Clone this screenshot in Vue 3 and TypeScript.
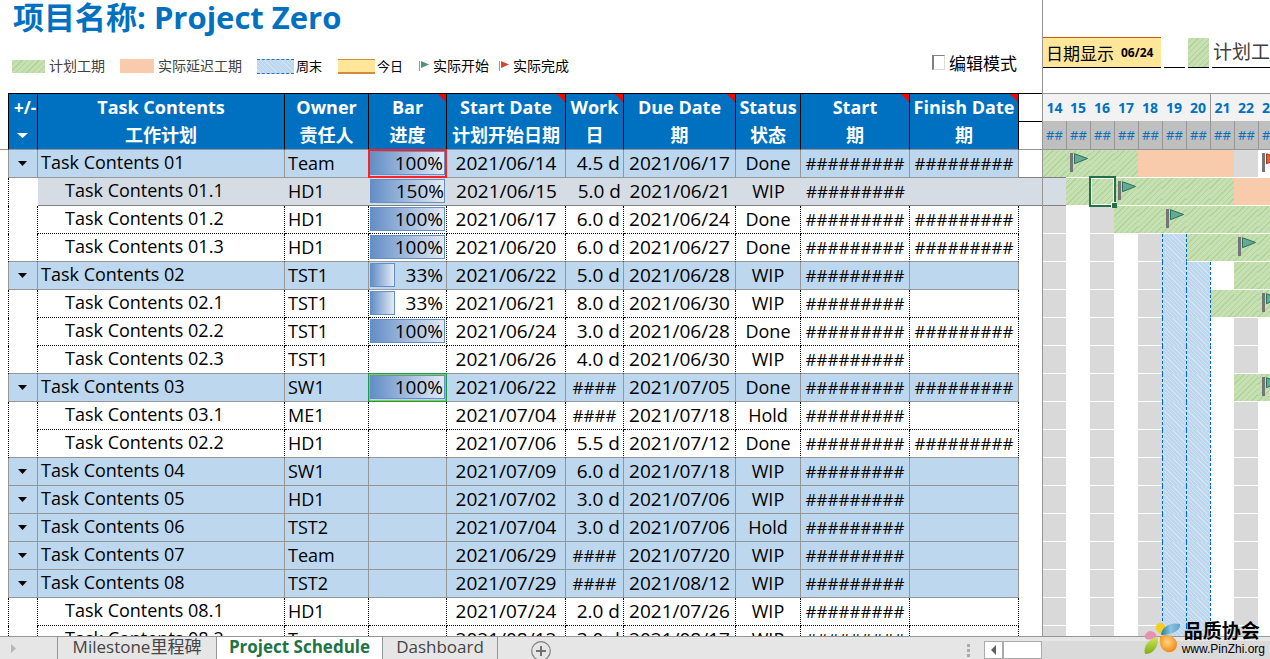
<script setup lang="ts">
type Kind = 'group' | 'child'
interface Task {
  name: string
  owner: string
  bar: number | null
  start: string
  work: string
  due: string
  status: string
  finished: boolean
  kind: Kind
  frame?: 'red' | 'green'
  selected?: boolean
  plan?: [number, number]
  delay?: [number, number]
  flag?: number
  endFlag?: number
}

const HASHES = '#########'

function row(kind: Kind, name: string, owner: string, bar: number | null, start: string, work: string,
  due: string, status: string, finished = false, extra: Partial<Task> = {}): Task {
  return { kind, name: 'Task Contents ' + name, owner, bar, start: '2021/' + start, work, due: '2021/' + due, status, finished, ...extra }
}

const tasks: Task[] = [
  row('group', '01', 'Team', 100, '06/14', '4.5 d', '06/17', 'Done', true, { frame: 'red', plan: [14, 17], delay: [18, 21], flag: 15, endFlag: 23 }),
  row('child', '01.1', 'HD1', 150, '06/15', '5.0 d', '06/21', 'WIP', false, { selected: true, plan: [15, 21], delay: [22, 23], flag: 17 }),
  row('child', '01.2', 'HD1', 100, '06/17', '6.0 d', '06/24', 'Done', true, { plan: [17, 24], flag: 19 }),
  row('child', '01.3', 'HD1', 100, '06/20', '6.0 d', '06/27', 'Done', true, { plan: [20, 27], flag: 22 }),
  row('group', '02', 'TST1', 33, '06/22', '5.0 d', '06/28', 'WIP', false, { plan: [22, 28] }),
  row('child', '02.1', 'TST1', 33, '06/21', '8.0 d', '06/30', 'WIP', false, { plan: [21, 30], flag: 23 }),
  row('child', '02.2', 'TST1', 100, '06/24', '3.0 d', '06/28', 'Done', true),
  row('child', '02.3', 'TST1', null, '06/26', '4.0 d', '06/30', 'WIP'),
  row('group', '03', 'SW1', 100, '06/22', '####', '07/05', 'Done', true, { frame: 'green', plan: [22, 30], flag: 23 }),
  row('child', '03.1', 'ME1', null, '07/04', '####', '07/18', 'Hold'),
  row('child', '02.2', 'HD1', null, '07/06', '5.5 d', '07/12', 'Done', true),
  row('group', '04', 'SW1', null, '07/09', '6.0 d', '07/18', 'WIP'),
  row('group', '05', 'HD1', null, '07/02', '3.0 d', '07/06', 'WIP'),
  row('group', '06', 'TST2', null, '07/04', '3.0 d', '07/06', 'Hold'),
  row('group', '07', 'Team', null, '06/29', '####', '07/20', 'WIP'),
  row('group', '08', 'TST2', null, '07/29', '####', '08/12', 'WIP'),
  row('child', '08.1', 'HD1', null, '07/24', '2.0 d', '07/26', 'WIP'),
  row('child', '08.2', 'Team', null, '08/12', '3.0 d', '08/17', 'WIP'),
]

const headers = [
  { en: 'Task Contents', zh: '工作计划', note: false },
  { en: 'Owner', zh: '责任人', note: false },
  { en: 'Bar', zh: '进度', note: true },
  { en: 'Start Date', zh: '计划开始日期', note: true },
  { en: 'Work', zh: '日', note: true },
  { en: 'Due Date', zh: '期', note: true },
  { en: 'Status', zh: '状态', note: false },
  { en: 'Start', zh: '期', note: true },
  { en: 'Finish Date', zh: '期', note: true },
]

const days = [14, 15, 16, 17, 18, 19, 20, 21, 22, 23]

function within(day: number, range?: [number, number]): boolean {
  return !!range && day >= range[0] && day <= range[1]
}

function dayClass(task: Task, day: number): string {
  if (within(day, task.plan)) return 'plan'
  if (within(day, task.delay)) return 'delay'
  if (task.selected && day === 14) return 'picked'
  if (day === 19 || day === 20) return 'weekend'
  return day % 2 === 0 ? 'shade' : ''
}

function rowClass(task: Task, index: number) {
  const next = tasks[index + 1]
  return [task.kind, { selected: task.selected, solid: !!next && next.kind === 'group' }]
}

const isHash = (text: string): boolean => text.startsWith('#')
</script>

<template>
  <div class="workbook">
    <main class="sheet">
      <section class="pane">
        <header class="top">
          <h1>项目名称: Project Zero</h1>
          <div class="tools">
            <ul class="legend">
              <li class="soft"><i class="swatch plan"></i>计划工期</li>
              <li class="soft"><i class="swatch late"></i>实际延迟工期</li>
              <li class="small"><i class="swatch week"></i>周末</li>
              <li class="small"><i class="swatch today"></i>今日</li>
              <li class="mark">
                <svg width="10" height="12" viewBox="0 0 10 12"><path d="M0.5 1V11" stroke="#999" /><path d="M2 1L10 4.5L2 8Z" fill="#4c9480" /></svg>实际开始
              </li>
              <li class="mark">
                <svg width="10" height="12" viewBox="0 0 10 12"><path d="M0.5 1V11" stroke="#999" /><path d="M2 1L10 4.5L2 8Z" fill="#d2482a" /></svg>实际完成
              </li>
            </ul>
            <label class="edit"><input type="checkbox" />编辑模式</label>
          </div>
        </header>

        <table class="grid">
          <colgroup>
            <col class="c-edge" /><col class="c-toggle" /><col class="c-task" /><col class="c-owner" /><col class="c-bar" />
            <col class="c-start" /><col class="c-work" /><col class="c-due" /><col class="c-status" />
            <col class="c-real" /><col class="c-real" /><col class="c-gap" />
          </colgroup>
          <thead>
            <tr>
              <td class="edge"></td>
              <th class="toggle">
                <span class="line">+/-</span>
                <button class="line" aria-label="Filter"><svg width="11" height="5" viewBox="0 0 11 5"><path d="M0 0H11L5.5 5Z" fill="#fff" /></svg></button>
              </th>
              <th v-for="(h, i) in headers" :key="i" :class="{ note: h.note }">
                <span class="line">{{ h.en }}</span><span class="line">{{ h.zh }}</span>
              </th>
              <td class="gap"><span class="rule"></span></td>
            </tr>
          </thead>
          <tbody>
            <tr v-for="(t, i) in tasks" :key="i" :class="rowClass(t, i)">
              <td class="edge"></td>
              <td class="toggle">
                <button v-if="t.kind === 'group'" :aria-label="'Toggle ' + t.name"><svg width="9" height="5" viewBox="0 0 9 5"><path d="M0 0H9L4.5 5Z" fill="#000" /></svg></button>
              </td>
              <td class="task">{{ t.name }}</td>
              <td class="owner">{{ t.owner }}</td>
              <td class="bar" :class="t.frame">
                <template v-if="t.bar !== null">
                  <i class="fill" :style="{ width: Math.min(t.bar, 100) + '%' }"></i><span>{{ t.bar }}%</span>
                </template>
              </td>
              <td class="date">{{ t.start }}</td>
              <td class="work" :class="{ hash: isHash(t.work) }">{{ t.work }}</td>
              <td class="date">{{ t.due }}</td>
              <td class="status">{{ t.status }}</td>
              <td class="hash">{{ HASHES }}</td>
              <td class="hash">{{ t.finished ? HASHES : '' }}</td>
              <td class="gap"></td>
            </tr>
          </tbody>
        </table>
      </section>

      <section class="pane chart">
        <header class="top keys">
          <div class="shown"><span>日期显示</span><b>06/24</b></div>
          <div class="blank"></div>
          <div class="sample plan"></div>
          <div class="caption">计划工期</div>
        </header>
        <table class="gantt">
          <colgroup><col v-for="d in days" :key="d" :class="d === 14 ? 'c-first' : 'c-day'" /></colgroup>
          <thead>
            <tr class="nums"><th v-for="d in days" :key="d" :class="{ monday: d === 21 }">{{ d }}</th></tr>
            <tr class="names"><th v-for="d in days" :key="d">##</th></tr>
          </thead>
          <tbody>
            <tr v-for="(t, i) in tasks" :key="i">
              <td v-for="d in days" :key="d" :class="[dayClass(t, d), { above: i === 0 && d === 14 }]">
                <svg v-if="t.flag === d" class="flag" width="19" height="20" viewBox="0 0 19 20"><path d="M0 0H3V19H0Z" fill="#757575" /><path d="M4.5 0.7L17.5 5.5L4.5 10.7Z" fill="#69a893" stroke="#28705c" /></svg>
                <svg v-if="t.endFlag === d" class="flag" width="19" height="20" viewBox="0 0 19 20"><path d="M0 0H3V19H0Z" fill="#757575" /><path d="M4.5 0.7L17.5 5.5L4.5 10.7Z" fill="#e0603f" stroke="#a83418" /></svg>
                <span v-if="t.selected && d === 16" class="cursor"></span>
              </td>
            </tr>
          </tbody>
        </table>
      </section>
    </main>

    <footer class="tabs">
      <button class="prev" aria-label="Scroll tabs"><svg width="5" height="9" viewBox="0 0 5 9"><path d="M0 0L5 4.5L0 9Z" fill="#b8b8b8" /></svg></button>
      <button class="tab first">Milestone里程碑</button>
      <button class="tab active">Project Schedule</button>
      <button class="tab last">Dashboard</button>
      <button class="add" aria-label="New sheet"><svg width="20" height="20" viewBox="0 0 20 20"><circle cx="10" cy="10" r="9.3" fill="none" stroke="#808080" stroke-width="1.2" /><path d="M5 10H15M10 5V15" stroke="#707070" stroke-width="2" /></svg></button>
      <span class="grip"><i></i><i></i><i></i></span>
      <div class="scroll">
        <button class="back" aria-label="Scroll left"><svg width="5" height="10" viewBox="0 0 5 10"><path d="M5 0V10L0 5Z" fill="#606060" /></svg></button>
        <span class="thumb"></span>
      </div>
    </footer>

    <aside class="brand">
      <svg width="38" height="34" viewBox="0 0 38 34">
        <defs>
          <radialGradient id="orange" cx="0.45" cy="0.4" r="0.6"><stop offset="0" stop-color="#ffd680" /><stop offset="1" stop-color="#f08a1c" /></radialGradient>
          <linearGradient id="blue"><stop offset="0" stop-color="#1f78ad" /><stop offset="0.5" stop-color="#8cc3df" /><stop offset="1" stop-color="#5fa3c8" /></linearGradient>
          <linearGradient id="lime" x2="0" y2="1"><stop offset="0" stop-color="#d2e65a" /><stop offset="1" stop-color="#7fae16" /></linearGradient>
        </defs>
        <path d="M17 12C9 8 11 1 17 1C23 1 22 8 17 12Z" fill="#f6cf1d" />
        <path d="M13 15C5 20 -1 17 1 13C4 7 11 8 13 15Z" fill="#e691b4" />
        <path d="M17 13C18 4 27 0 36 2C37 8 29 13 17 13Z" fill="url(#blue)" />
        <path d="M14 15C15 25 9 32 1 32C-1 26 3 17 14 15Z" fill="url(#lime)" />
        <path d="M16 15C23 10 33 15 33 22C33 28 28 31 23 30C17 28 15 22 16 15Z" fill="url(#orange)" />
      </svg>
      <div class="words"><strong>品质协会</strong><span>www.PinZhi.org</span></div>
    </aside>
  </div>
</template>

<style>
body {
  margin: 0;
  overflow: hidden;
}
</style>

<style scoped>
.workbook {
  position: relative;
  display: flex;
  flex-direction: column;
  height: 100vh;
  overflow: hidden;
  background: #fff;
  color: #000;
  font-family: "Open Sans", "Noto Sans CJK SC", sans-serif;
}
button {
  padding: 0;
  border: 0;
  background: none;
  font: inherit;
  color: inherit;
}
svg {
  display: block;
}
.sheet {
  display: flex;
  flex: 1;
  min-height: 0;
  overflow: hidden;
}
.pane {
  flex: none;
}
.chart {
  flex: 1;
  min-width: 0;
  overflow: hidden;
  border-left: 1px solid #969696;
}
.top {
  box-sizing: border-box;
  height: 93px;
}
h1 {
  margin: 0;
  padding-left: 13px;
  height: 36px;
  line-height: 34px;
  font-size: 31px;
  color: #0070c0;
}
.tools {
  display: flex;
  justify-content: space-between;
  align-items: center;
  height: 60px;
  padding: 0 25px 0 12px;
}
.legend {
  display: flex;
  align-items: center;
  margin: 0;
  padding: 0;
  list-style: none;
  font-size: 14px;
  line-height: 20px;
}
.legend li {
  display: flex;
  align-items: center;
  gap: 4px;
  margin-right: 15px;
}
.legend .small {
  font-size: 13px;
  gap: 2px;
  margin-right: 16px;
}
.soft {
  color: #404040;
}
.legend .mark {
  margin-right: 10px;
}
.swatch {
  box-sizing: border-box;
  width: 33px;
  height: 13px;
}
.swatch.late {
  width: 34px;
  height: 14px;
  background: #f8cbad;
}
.swatch.week {
  width: 37px;
  height: 15px;
  border: 1px dashed #2f75b5;
  border-width: 1px 0;
  background: repeating-linear-gradient(45deg, #bdd7ee 0 2px, #d0e2f3 2px 3px);
}
.swatch.today {
  width: 37px;
  height: 15px;
  border: solid #d68a3c;
  border-width: 1px 0 2px;
  background: #ffe699;
}
.plan {
  background: repeating-linear-gradient(135deg, #c6e0b4 0 3px, #b0d498 3px 4px);
}
.edit {
  display: flex;
  align-items: center;
  gap: 4px;
  padding-bottom: 8px;
  font-size: 17px;
}
.edit input {
  appearance: none;
  margin: 0;
  width: 13px;
  height: 15px;
  border: 1px solid #dcdcdc;
  border-top-color: #808080;
  border-left: 2px solid #808080;
  background: #fff;
}

table {
  table-layout: fixed;
  border-collapse: separate;
  border-spacing: 0;
}
.grid {
  width: 1042px;
}
.c-edge { width: 9px; }
.c-toggle { width: 29px; }
.c-task { width: 247px; }
.c-owner { width: 84px; }
.c-bar { width: 78px; }
.c-start { width: 119px; }
.c-work { width: 58px; }
.c-due { width: 112px; }
.c-status { width: 65px; }
.c-real { width: 109px; }
.c-gap { width: 23px; }
.c-first { width: 23px; }
.c-day { width: 24px; }

th,
td {
  box-sizing: border-box;
  padding: 0;
  white-space: nowrap;
}
.grid th {
  position: relative;
  height: 57px;
  border: solid #000;
  border-width: 1px 1px 1px 0;
  border-bottom-color: #969696;
  background: #0070c0;
  color: #fff;
  font-size: 18px;
  font-weight: 700;
  vertical-align: top;
  overflow: hidden;
}
.line {
  display: block;
  width: 100%;
  height: 28px;
  line-height: 27px;
  text-align: center;
}
.line svg {
  margin: 0 auto;
}
.line + .line {
  height: 27px;
}
.grid th.toggle span.line {
  box-sizing: border-box;
  padding-left: 5px;
  font-size: 17px;
  text-align: left;
}
.note::after {
  content: "";
  position: absolute;
  top: 0;
  right: 0;
  width: 8px;
  height: 8px;
  background: #f00;
  clip-path: polygon(0 0, 100% 0, 100% 100%);
}
thead .edge {
  border-right: 1px solid #000;
  border-bottom: 1px solid #969696;
}
thead .gap {
  border-top: 1px solid #000;
  border-bottom: 1px solid #969696;
  vertical-align: top;
}
.rule {
  display: block;
  box-sizing: border-box;
  height: 28px;
  border-bottom: 1px solid #000;
}
.grid tbody td {
  height: 28px;
  border-right: 1px dotted #000;
  border-bottom: 1px dotted #000;
  font-size: 19px;
  line-height: 27px;
}
.grid tbody .child:not(.solid) td.toggle {
  border-bottom: 0;
}
.grid tbody .solid td {
  border-bottom: 1px solid #969696;
}
.grid tbody .group td {
  border-right: 1px solid #969696;
  border-bottom: 1px solid #969696;
  background: #bdd7ee;
}
.grid tbody .selected td {
  border-right: 0;
  border-bottom: 1px solid #808080;
  background: #d6dce4;
}
.grid tbody .selected td.toggle {
  border-bottom: 0;
  background: none;
}
.grid tbody tr td.edge {
  background: none;
  border-bottom: 0;
}
.grid tbody .selected td.edge {
  border-right: 1px dotted #000;
}
.grid tbody tr:not(.selected) td.gap {
  background: none;
  border: 0;
}
.grid tbody tr.group:first-child td.gap {
  border-bottom: 1px solid #808080;
}
.toggle button {
  display: flex;
  align-items: center;
  justify-content: center;
  box-sizing: border-box;
  width: 100%;
  padding-right: 2px;
}
.grid tbody td.task {
  padding: 0 0 2px 3px;
  font-size: 18px;
  line-height: 25px;
}
.grid tbody .child td.task {
  padding-left: 27px;
}
.owner {
  padding-left: 3px;
}
.grid tbody td.owner,
.grid tbody td.status {
  font-size: 18px;
}
.bar {
  position: relative;
  padding: 0 3px 0 1px;
  text-align: right;
}
.bar span {
  position: relative;
}
.fill {
  position: absolute;
  top: 1px;
  left: 1px;
  box-sizing: border-box;
  height: 24px;
  max-width: 75px;
  border: 1px solid #638ec6;
  background: linear-gradient(to right, #638ec6, #e3eaf5);
}
.bar.red::after,
.bar.green::after {
  content: "";
  position: absolute;
  inset: -1px;
  border: 2px solid #f22;
}
.bar.green::after {
  border: 1px solid #1e9a50;
  box-shadow: inset 0 0 0 1px #8fca4a;
}
.date,
.status {
  text-align: center;
}
.work {
  padding-right: 3px;
  text-align: right;
}
.grid tbody td.hash {
  font-size: 17px;
  text-align: center;
}
.grid tbody td.work.hash {
  padding: 0;
}

.keys {
  display: flex;
  align-items: flex-start;
  gap: 3px;
  padding-top: 37px;
}
.keys div {
  box-sizing: border-box;
  flex: none;
  height: 31px;
  border-bottom: 1px solid #000;
}
.keys .shown {
  display: flex;
  align-items: center;
  gap: 7px;
  width: 118px;
  padding-left: 3px;
  border-top: 1px solid #c55a11;
  background: #ffe699;
  font-size: 17px;
}
.shown b {
  font-size: 12px;
}
.keys .blank,
.keys .sample {
  width: 21px;
}
.keys .sample {
  border-top: 1px solid #fff;
}
.keys .caption {
  min-width: 120px;
  padding-left: 1px;
  font-size: 19px;
  line-height: 30px;
  color: #404040;
}
.gantt {
  width: 239px;
}
.nums th {
  height: 28px;
  border-top: 1px solid #969696;
  background: #f2f2f2;
  color: #0070c0;
  font-size: 14px;
  line-height: 27px;
}
.nums .monday {
  border-left: 1px solid #969696;
}
.names th {
  height: 29px;
  border-left: 1px solid #969696;
  border-bottom: 1px solid #969696;
  background: #bfbfbf;
  color: #0070c0;
  font-size: 13px;
  font-weight: 400;
}
.names th:first-child {
  border-left: 0;
}
.gantt tbody td {
  position: relative;
  height: 28px;
  border-bottom: 1px solid #fff;
}
.shade {
  background: #d9d9d9;
}
.delay {
  background: #f8cbad;
}
.gantt tbody td.picked {
  background: #d6dce4;
  border-bottom-color: #808080;
}
.gantt tbody td.above {
  border-bottom-color: #808080;
}
.gantt tbody td.weekend {
  border-left: 1px dashed #0066d6;
  border-bottom: 0;
  background: repeating-linear-gradient(45deg, #bdd7ee 0 2px, #d2e4f4 2px 3px);
}
.gantt tbody .weekend + td:not(.weekend) {
  border-left: 1px dashed #0066d6;
}
.flag {
  position: absolute;
  top: 3px;
  left: 4px;
}
.cursor {
  position: absolute;
  inset: -2px -2px -2px -1px;
  border: 2px solid #217346;
  box-shadow: inset 0 0 0 1px #fff;
  z-index: 1;
}
.cursor::after {
  content: "";
  position: absolute;
  right: -3px;
  bottom: -3px;
  width: 5px;
  height: 5px;
  border: solid #fff;
  border-width: 1px 0 0 1px;
  background: #217346;
}

.tabs {
  display: flex;
  flex: none;
  box-sizing: border-box;
  height: 23px;
  border-top: 1px solid #969696;
  background: #e6e6e6;
  overflow: hidden;
  font-size: 17px;
  line-height: 20px;
  color: #444;
}
.prev {
  display: flex;
  align-items: center;
  width: 57px;
  padding-left: 11px;
}
.tab {
  box-sizing: border-box;
  height: 22px;
  padding: 0 11px 2px;
  border-left: 1px solid #969696;
  white-space: nowrap;
}
.tab.first {
  width: 159px;
}
.tab.active {
  width: 167px;
  border-right: 1px solid #969696;
  background: #fff;
  color: #217346;
  font-weight: 700;
}
.tab.last {
  width: 115px;
  border-left: 0;
  border-right: 1px solid #969696;
}
.add {
  align-self: flex-start;
  padding: 4px 0 0 33px;
}
.grip {
  display: flex;
  flex-direction: column;
  gap: 2px;
  padding-top: 7px;
  margin-left: 416px;
}
.grip i {
  width: 3px;
  height: 3px;
  background: #ababab;
}
.scroll {
  display: flex;
  flex: 1;
  box-sizing: border-box;
  margin: 4px 0 0 14px;
  background: #dadada;
}
.back {
  display: flex;
  align-items: center;
  justify-content: center;
  box-sizing: border-box;
  width: 19px;
  border: 1px solid #ababab;
  background: #fff;
}
.thumb {
  box-sizing: border-box;
  width: 39px;
  border: 1px solid #ababab;
  background: #fff;
}

.brand {
  position: absolute;
  right: 5px;
  bottom: 3px;
  display: flex;
}
.words {
  display: flex;
  flex-direction: column;
  font-size: 12px;
  line-height: 14px;
  font-family: "Liberation Sans", "Noto Sans CJK SC", sans-serif;
}
.words strong {
  padding-left: 2px;
  font-size: 19px;
  line-height: 20px;
}
</style>
